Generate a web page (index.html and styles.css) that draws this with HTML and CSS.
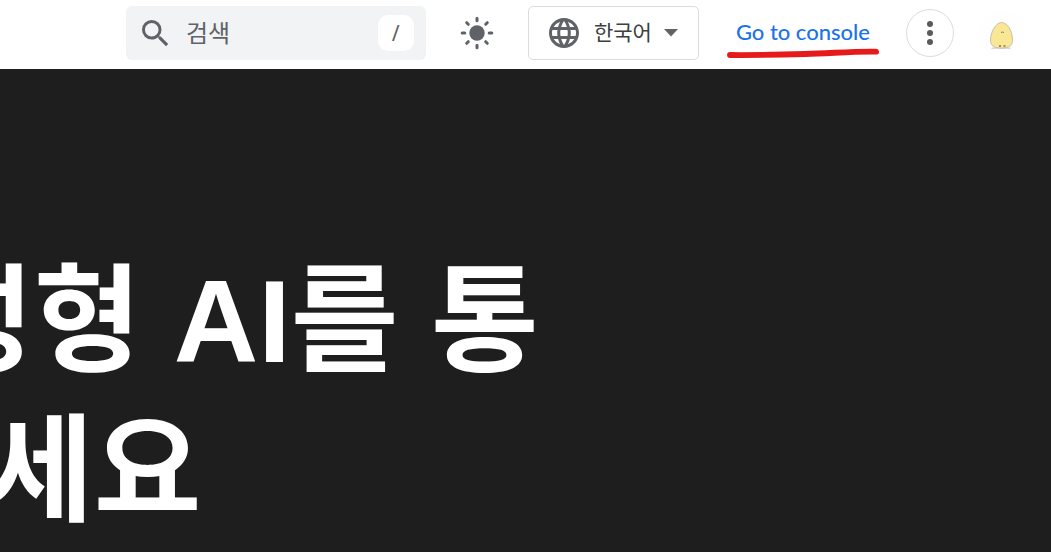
FILE: index.html
```html
<!DOCTYPE html>
<html lang="ko">
<head>
<meta charset="utf-8">
<meta name="viewport" content="width=device-width, initial-scale=1">
<title>Console</title>
<link rel="stylesheet" href="styles.css">
</head>
<body>
<header class="topbar">
  <form class="search" role="search">
    <svg class="search-icon" viewBox="3 3 18 18" aria-hidden="true"><path d="M15.5 14h-.79l-.28-.27A6.471 6.471 0 0 0 16 9.5 6.5 6.5 0 1 0 9.5 16c1.61 0 3.09-.59 4.23-1.57l.27.28v.79l5 4.99L20.49 19l-4.99-5zm-6 0C7.01 14 5 11.99 5 9.5S7.01 5 9.5 5 14 7.01 14 9.5 11.99 14 9.5 14z"/></svg>
    <input class="search-input" type="text" placeholder="검색" aria-label="검색">
    <kbd class="search-key">/</kbd>
  </form>
  <button class="theme" type="button" aria-label="테마">
    <svg class="theme-icon" viewBox="0 0 34 34" aria-hidden="true">
      <circle cx="17" cy="17" r="7.7" fill="currentColor"/>
      <path d="M17 2.2v2.6M17 29.2v2.6M2.2 17h2.6M29.2 17h2.6M6.7 6.7l1.6 1.6M25.7 25.7l1.6 1.6M6.7 27.3l1.6-1.6M25.7 8.3l1.6-1.6" stroke="currentColor" stroke-width="3" stroke-linecap="round"/>
    </svg>
  </button>
  <button class="language" type="button">
    <svg class="globe" viewBox="2 2 20 20" aria-hidden="true"><path d="M11.99 2C6.47 2 2 6.48 2 12s4.47 10 9.99 10C17.52 22 22 17.52 22 12S17.52 2 11.99 2zm6.93 6h-2.95a15.65 15.65 0 0 0-1.38-3.56A8.03 8.03 0 0 1 18.92 8zM12 4.04c.83 1.2 1.48 2.53 1.91 3.96h-3.82c.43-1.43 1.08-2.76 1.91-3.96zM4.26 14C4.1 13.36 4 12.69 4 12s.1-1.36.26-2h3.38c-.08.66-.14 1.32-.14 2s.06 1.34.14 2H4.26zm.82 2h2.95c.32 1.25.78 2.45 1.38 3.56A7.987 7.987 0 0 1 5.08 16zm2.95-8H5.08a7.987 7.987 0 0 1 4.33-3.56A15.65 15.65 0 0 0 8.03 8zM12 19.96c-.83-1.2-1.48-2.53-1.91-3.96h3.82c-.43 1.43-1.08 2.76-1.91 3.96zM14.34 14H9.66c-.09-.66-.16-1.32-.16-2s.07-1.35.16-2h4.68c.09.65.16 1.32.16 2s-.07 1.34-.16 2zm.25 5.56c.6-1.11 1.06-2.31 1.38-3.56h2.95a8.03 8.03 0 0 1-4.33 3.56zM16.36 14c.08-.66.14-1.32.14-2s-.06-1.34-.14-2h3.38c.16.64.26 1.31.26 2s-.1 1.36-.26 2h-3.38z"/></svg>
    <span class="language-name">한국어</span>
    <svg class="caret" viewBox="0 0 14 8" aria-hidden="true"><path d="M0 0h14L7 7.5z"/></svg>
  </button>
  <a class="console" href="#">Go to console
    <svg class="marker" viewBox="0 0 152 10" preserveAspectRatio="none" aria-hidden="true"><path d="M3 7C30 7.200 50 6.800 78 6C105 5.300 125 3.200 149 3.600" fill="none" stroke="#e61a1a" stroke-width="5.800" stroke-linecap="round"/></svg>
  </a>
  <button class="more" type="button" aria-label="더보기">
    <svg class="more-icon" viewBox="0 0 6 24" aria-hidden="true"><circle cx="3" cy="3" r="3"/><circle cx="3" cy="12" r="3"/><circle cx="3" cy="21" r="3"/></svg>
  </button>
  <button class="account" type="button" aria-label="계정">
    <svg class="avatar" viewBox="0 0 48 48" aria-hidden="true">
      <circle cx="24" cy="24" r="22" fill="#fefefe"/>
      <path d="M15 39.200h18" stroke="#cfcfcf" stroke-width="1.200" stroke-linecap="round"/>
      <path d="M24.500 13.500c-5.500 0-11 9.500-11 17.500 0 5 2.500 8 11 8s11-3 11-8c0-8-4.500-17.500-11-17.500z" fill="#fae796" stroke="#b9b5a0" stroke-width=".8"/>
      <path d="M24 23.500q1.500-.8 3 0" fill="none" stroke="#8d8460"/>
      <path d="M22 37h2M26.500 37h2" stroke="#85744a" stroke-width="1.600"/>
    </svg>
  </button>
</header>
<main class="hero">
  <h1 class="title">
    <span class="line line-first">성형 AI를 통</span>
    <span class="line line-last">세요</span>
  </h1>
</main>
</body>
</html>
```
FILE: styles.css
```css
* { box-sizing: border-box; }
body {
  margin: 0;
  min-height: 100vh;
  display: flex;
  flex-direction: column;
  background: #1e1e1e;
  color: #5f6368;
  font-family: "Noto Sans", "Noto Sans CJK KR", sans-serif;
}
button { padding: 0; border: 0; background: none; color: inherit; font: inherit; cursor: pointer; }
svg { display: block; fill: currentColor; }
.topbar {
  display: flex;
  align-items: center;
  justify-content: flex-end;
  padding: 6px 26px 9px;
  background: #fff;
}
.search {
  display: flex;
  align-items: center;
  width: 300px;
  height: 54px;
  padding: 0 12px 0 16px;
  border-radius: 6px;
  background: #f1f3f4;
}
.search-icon { width: 27px; height: 27px; flex: none; }
.search-input {
  flex: 1;
  min-width: 0;
  padding: 0 0 4px;
  margin-left: 17px;
  border: 0;
  outline: 0;
  background: none;
  color: #5f6368;
  font: 24px "Noto Sans CJK KR", sans-serif;
}
.search-input::placeholder { color: #5f6368; opacity: 1; }
.search-key {
  width: 36px;
  height: 36px;
  border-radius: 10px;
  background: #fff;
  font: 500 20px/36px Roboto, sans-serif;
  text-align: center;
}
.theme { margin: 0 34px; }
.theme-icon { width: 34px; height: 34px; }
.language {
  display: flex;
  align-items: center;
  height: 54px;
  padding: 0 20px;
  border: 1px solid #dadce0;
  border-radius: 5px;
}
.globe { width: 30px; height: 30px; }
.language-name {
  margin: 0 12px 0 15px;
  padding-bottom: 4px;
  color: #3c4043;
  font: 400 21px/30px "Noto Sans CJK KR", sans-serif;
}
.caret { width: 14px; height: 8px; }
.console {
  position: relative;
  margin: 0 36px 0 37px;
  padding-bottom: 2px;
  color: #1a73e8;
  font: 500 22px/30px Lato, sans-serif;
  text-decoration: none;
  white-space: nowrap;
}
.marker { position: absolute; left: -9px; top: 31px; width: calc(100% + 18px); height: 10px; }
.more {
  display: grid;
  place-items: center;
  width: 48px;
  height: 48px;
  border: 1px solid #dadce0;
  border-radius: 50%;
  color: #5a5a5a;
}
.more-icon { width: 6px; height: 24px; }
.account { margin-left: 23px; }
.avatar { width: 48px; height: 48px; }
.hero { flex: 1; padding: 178px 0 0; overflow: hidden; }
.title {
  margin: 0;
  color: #fff;
  font: 700 117px/150px "Liberation Sans", "Noto Sans CJK KR", sans-serif;
  white-space: nowrap;
}
.line { display: block; }
.line-first { margin-left: -74px; }
.line-last { margin-left: -14px; }
```
